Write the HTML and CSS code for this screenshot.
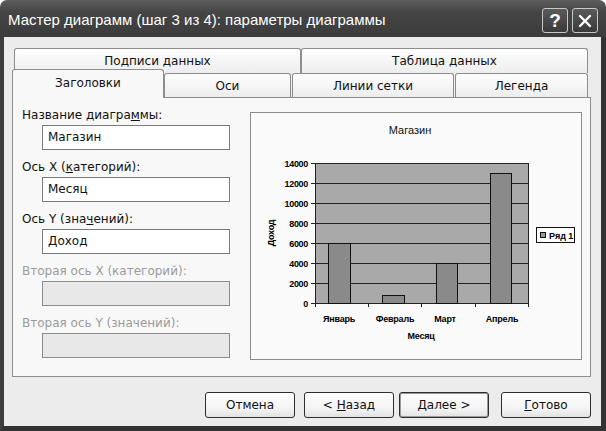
FILE: index.html
```html
<!DOCTYPE html>
<html lang="ru">
<head>
  <meta charset="UTF-8" />
  <title>Мастер диаграмм</title>
  <link rel="stylesheet" href="styles.css">
</head>
<body>

  <div class="window">
    <div class="titlebar">
      <span class="title">Мастер диаграмм (шаг 3 из 4): параметры диаграммы</span>
      <div class="title-buttons">
        <span class="tbtn">?</span>
        <span class="tbtn">
          <svg width="16" height="16" viewBox="0 0 16 16"><path d="M3 3 L13 13 M13 3 L3 13" stroke="#fff" stroke-width="2.4" stroke-linecap="round"/></svg>
        </span>
      </div>
    </div>

    <div class="frame">
      <div class="tabs">
        <div class="tab-row back">
          <div class="tab wide">Подписи данных</div>
          <div class="tab wide">Таблица данных</div>
        </div>
        <div class="tab-row front">
          <div class="tab active t1">Заголовки</div>
          <div class="tab t2">Оси</div>
          <div class="tab t3">Линии сетки</div>
          <div class="tab t4">Легенда</div>
        </div>
      </div>

      <div class="panel">
        <div class="fields">
          <div class="field">
            <label>Название диагра<u>м</u>мы:</label>
            <div class="input">Магазин</div>
          </div>
          <div class="field">
            <label>Ось X (<u>к</u>атегорий):</label>
            <div class="input">Месяц</div>
          </div>
          <div class="field">
            <label>Ось Y (зна<u>ч</u>ений):</label>
            <div class="input">Доход</div>
          </div>
          <div class="field disabled">
            <label>Вторая ось X (категорий):</label>
            <div class="input"></div>
          </div>
          <div class="field disabled">
            <label>Вторая ось Y (значений):</label>
            <div class="input"></div>
          </div>
        </div>

        <div class="chart">
          <svg width="330" height="246" viewBox="1 1 330 246">
            <text x="160" y="22" class="c-title">Магазин</text>
            <rect x="65" y="51" width="213" height="140" fill="#a9a9a9"/>
            <g stroke="#222" stroke-width="1">
              <line x1="65" y1="51.5" x2="278" y2="51.5"/>
              <line x1="65" y1="71.5" x2="278" y2="71.5"/>
              <line x1="65" y1="91.5" x2="278" y2="91.5"/>
              <line x1="65" y1="111.5" x2="278" y2="111.5"/>
              <line x1="65" y1="131.5" x2="278" y2="131.5"/>
              <line x1="65" y1="151.5" x2="278" y2="151.5"/>
              <line x1="65" y1="171.5" x2="278" y2="171.5"/>
              <line x1="278.5" y1="51" x2="278.5" y2="191"/>
              <line x1="65.5" y1="51" x2="65.5" y2="195"/>
              <line x1="61" y1="191.5" x2="278" y2="191.5"/>
              <line x1="61" y1="51.5" x2="65" y2="51.5"/>
              <line x1="61" y1="71.5" x2="65" y2="71.5"/>
              <line x1="61" y1="91.5" x2="65" y2="91.5"/>
              <line x1="61" y1="111.5" x2="65" y2="111.5"/>
              <line x1="61" y1="131.5" x2="65" y2="131.5"/>
              <line x1="61" y1="151.5" x2="65" y2="151.5"/>
              <line x1="61" y1="171.5" x2="65" y2="171.5"/>
              <line x1="118.5" y1="191" x2="118.5" y2="195"/>
              <line x1="171.5" y1="191" x2="171.5" y2="195"/>
              <line x1="225.5" y1="191" x2="225.5" y2="195"/>
              <line x1="278.5" y1="191" x2="278.5" y2="195"/>
            </g>
            <g fill="#8a8a8a" stroke="#111" stroke-width="1">
              <rect x="78.5" y="131.5" width="22" height="60"/>
              <rect x="132.5" y="183.5" width="22" height="8"/>
              <rect x="186.5" y="151.5" width="21" height="40"/>
              <rect x="240.5" y="61.5" width="21" height="130"/>
            </g>
            <g class="c-ylab">
              <text x="58" y="55">14000</text>
              <text x="58" y="75">12000</text>
              <text x="58" y="95">10000</text>
              <text x="58" y="115">8000</text>
              <text x="58" y="135">6000</text>
              <text x="58" y="155">4000</text>
              <text x="58" y="175">2000</text>
              <text x="58" y="195">0</text>
            </g>
            <g class="c-xlab">
              <text x="89" y="210">Январь</text>
              <text x="145" y="210">Февраль</text>
              <text x="195" y="210">Март</text>
              <text x="252" y="210">Апрель</text>
              <text x="171" y="227">Месяц</text>
              <text x="0" y="0" transform="translate(24 121) rotate(-90)">Доход</text>
            </g>
            <rect x="286.5" y="115.5" width="38" height="15" fill="#fff" stroke="#111"/>
            <rect x="290.5" y="120.5" width="5" height="5" fill="#999" stroke="#111"/>
            <text x="299" y="127" class="c-leg">Ряд 1</text>
          </svg>
        </div>
      </div>

      <div class="buttons">
        <div class="btn">Отмена</div>
        <div class="btn back-btn"><span>&lt; <u>Н</u>азад</span></div>
        <div class="btn next-btn"><span><u>Д</u>алее &gt;</span></div>
        <div class="btn finish-btn"><span><u>Г</u>отово</span></div>
      </div>
    </div>
  </div>

</body>
</html>
```

FILE: styles.css
```css
body {
  margin: 0;
  background-color: #fff;
  font-family: "DejaVu Sans", Tahoma, sans-serif;
  font-size: 12px;
  color: #111;
}

.window {
  width: 606px;
  height: 431px;
  overflow: hidden;
}

.titlebar {
  height: 37px;
  display: flex;
  align-items: center;
  justify-content: space-between;
  padding: 0 8px 0 8px;
  box-sizing: border-box;
  background: linear-gradient(#5c5c5c, #444 35%, #3c3c3c);
  border-radius: 7px 7px 0 0;
  color: #fff;
}

.title {
  font-family: "Liberation Sans", Arial, sans-serif;
  font-size: 15px;
  margin-top: 1px;
}

.title-buttons {
  display: flex;
  gap: 4px;
  margin-top: 4px;
}

.tbtn {
  width: 24px;
  height: 23px;
  border: 1px solid #c8c8c8;
  border-radius: 3px;
  background: linear-gradient(#5a5a5a, #3a3a3a);
  display: flex;
  align-items: center;
  justify-content: center;
  font-family: "Liberation Sans", Arial, sans-serif;
  font-size: 19px;
  font-weight: bold;
  color: #fff;
}

.frame {
  height: 394px;
  box-sizing: border-box;
  border-left: 4px solid #3d3d3d;
  border-right: 5px solid #333;
  border-bottom: 5px solid #333;
  background-color: #ececec;
  padding: 11px 10px 0 8px;
}

/* tabs */
.tab-row {
  display: flex;
}

.tab-row.back {
  height: 24px;
  padding: 0 3px 0 2px;
}

.tab-row.front {
  height: 25px;
  align-items: flex-end;
  padding-right: 3px;
}

.tab {
  box-sizing: border-box;
  border: 1px solid #8e8e8e;
  border-bottom: none;
  border-radius: 3px 3px 0 0;
  background: linear-gradient(#fefefe, #ededed);
  display: flex;
  align-items: center;
  justify-content: center;
}

.tab.wide {
  flex: 1;
  height: 25px;
  padding-bottom: 1px;
}

.front .tab {
  height: 24px;
}

.t1 { width: 152px; }
.t2 { width: 127px; }
.t3 { width: 162px; margin-left: 1px; }
.t4 { width: 133px; margin-left: 1px; }

.tab.active {
  height: 29px;
  margin-bottom: -1px;
  background: #f8f8f8;
  position: relative;
  z-index: 2;
  padding-bottom: 3px;
}

/* panel */
.panel {
  height: 280px;
  box-sizing: border-box;
  border: 1px solid #8e8e8e;
  background-color: #f8f8f8;
  display: flex;
  padding: 9px 8px 0 9px;
}

.fields {
  width: 228px;
}

.field {
  margin-bottom: 9px;
}

.field label {
  display: block;
  height: 17px;
  line-height: 17px;
  margin-bottom: 1px;
}

.input {
  margin-left: 20px;
  width: 188px;
  height: 25px;
  box-sizing: border-box;
  border: 1px solid #7a7a7a;
  background-color: #fff;
  padding-left: 5px;
  line-height: 23px;
}

.field.disabled label {
  color: #9b9b9b;
}

.field.disabled .input {
  background-color: #e8e8e8;
  border-color: #8c8c8c;
}

.chart {
  margin-top: 5px;
  width: 332px;
  height: 248px;
  box-sizing: border-box;
  border: 1px solid #8a8a8a;
  background-color: #fafafa;
}

.chart svg {
  display: block;
  font-family: "Liberation Sans", Arial, sans-serif;
}

.c-title {
  font-size: 11px;
  text-anchor: middle;
  fill: #111;
}

.c-ylab text {
  font-size: 9px;
  font-weight: bold;
  text-anchor: end;
  letter-spacing: -0.3px;
}

.c-xlab text {
  font-size: 9px;
  font-weight: bold;
  text-anchor: middle;
  letter-spacing: -0.2px;
}

.c-leg {
  font-size: 9px;
  font-weight: bold;
}

/* bottom buttons */
.buttons {
  display: flex;
  justify-content: flex-end;
  margin-top: 15px;
}

.btn {
  width: 90px;
  height: 26px;
  box-sizing: border-box;
  border: 1px solid #2e2e2e;
  border-radius: 3px;
  background: linear-gradient(#fff, #f2f2f2 70%, #e2e2e2);
  display: flex;
  align-items: center;
  justify-content: center;
}

.back-btn { margin-left: 9px; }
.next-btn {
  margin-left: 5px;
  box-shadow: inset 0 0 0 1px #9a9a9a;
}
.finish-btn { margin-left: 12px; }
```
